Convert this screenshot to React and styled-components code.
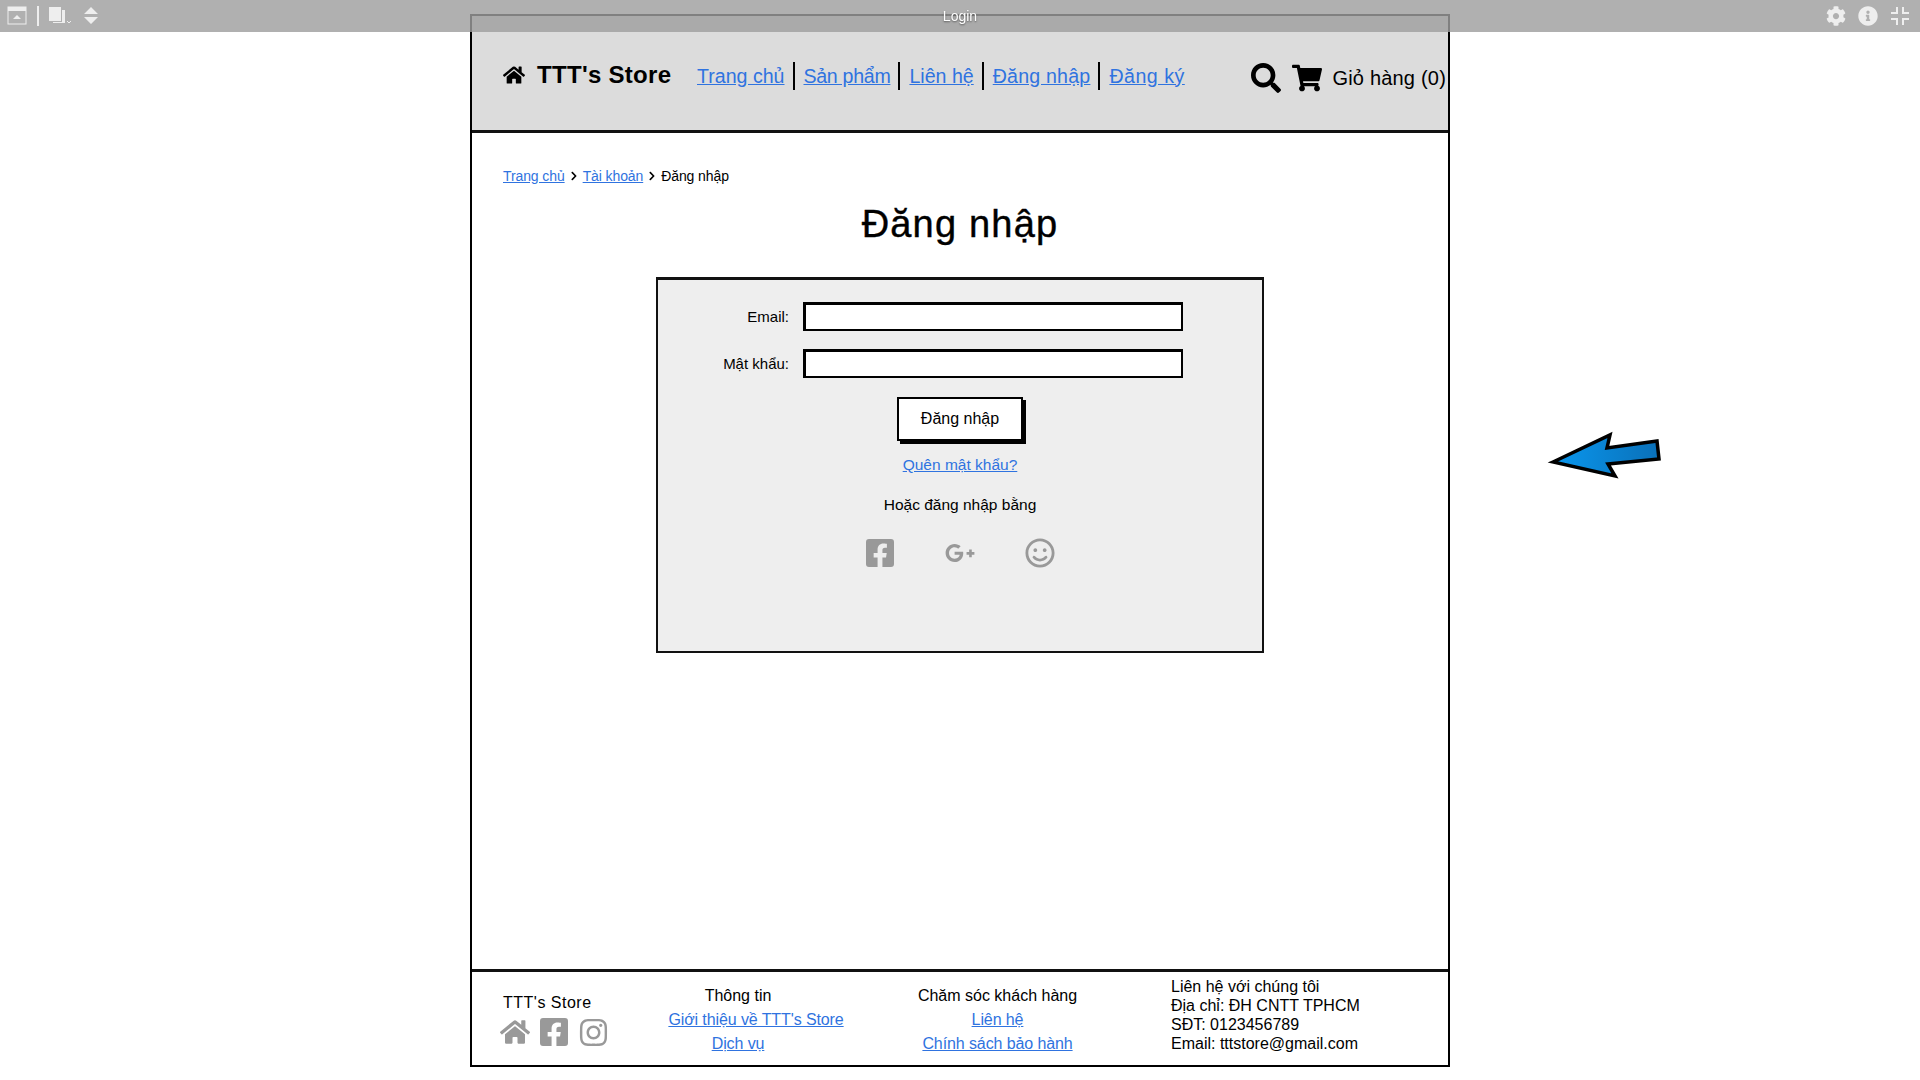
import React from 'react'
import styled, { createGlobalStyle } from 'styled-components'
import {
  FaHome, FaSearch, FaShoppingCart, FaFacebookSquare, FaGooglePlusG, FaRegSmile,
  FaInstagram, FaCog, FaInfoCircle, FaChevronRight,
} from 'react-icons/fa'

const GlobalStyle = createGlobalStyle`
  html, body {
    margin: 0;
    padding: 0;
    height: 1080px;
    overflow: hidden;
    background: #fff;
    color: #000;
    font-family: "Liberation Sans", Arial, sans-serif;
  }
  * { box-sizing: border-box; }
`

const TopBar = styled.div`
  position: fixed;
  top: 0;
  left: 0;
  right: 0;
  height: 32px;
  background: rgba(158, 158, 158, 0.81);
  display: flex;
  align-items: center;
  justify-content: space-between;
  padding: 0 10px 0 7px;
  z-index: 5;
`
const BarGroup = styled.div`
  display: flex;
  align-items: center;
  gap: ${(p) => p.$gap}px;
  color: #eee;
`
const BarDivider = styled.span`
  width: 2px;
  height: 20px;
  background: #eee;
`
const BarTitle = styled.span`
  position: absolute;
  left: 0;
  right: 0;
  text-align: center;
  color: #fff;
  font-size: 14px;
  text-shadow: 0 1px 2px rgba(0, 0, 0, 0.5);
`

const Frame = styled.div`
  width: 980px;
  height: 1053px;
  margin: 14px 0 0 470px;
  border: 2px solid #000;
  display: flex;
  flex-direction: column;
`

const Header = styled.header`
  height: 117px;
  flex: none;
  background: #dcdcdc;
  border-bottom: 3px solid #111;
  display: flex;
  align-items: center;
  padding: 3px 0 0 31px;
`
const Logo = styled.div`
  display: flex;
  align-items: center;
  gap: 12px;
  font-size: 24px;
  font-weight: bold;
  letter-spacing: 0.3px;
  width: 194px;
  flex: none;
`
const Nav = styled.nav`
  display: flex;
  align-items: center;
  height: 28px;
  margin-top: 2px;
`
const NavLink = styled.a`
  color: #2f73e0;
  text-decoration: underline;
  font-size: 19.6px;
  line-height: 24px;
  letter-spacing: ${(p) => p.$spacing || 0}px;
  white-space: nowrap;
`
const NavSep = styled.span`
  width: 2px;
  height: 28px;
  background: #000;
  margin: 0 9px 0 8px;
`
const HeaderTools = styled.div`
  margin-left: auto;
  display: flex;
  align-items: center;
  margin-top: 7px;
`
const SearchIcon = styled(FaSearch)`
  margin-right: 11px;
`
const CartLabel = styled.span`
  font-size: 20px;
  letter-spacing: 0.2px;
  white-space: nowrap;
  margin-left: 10px;
  padding-right: 2px;
`

const Main = styled.main`
  flex: 1;
  padding: 34px 31px 0;
  display: flex;
  flex-direction: column;
`
const Crumbs = styled.div`
  display: flex;
  align-items: center;
  font-size: 14px;
  line-height: 18px;
  letter-spacing: -0.1px;
  gap: 4px;
`
const CrumbLink = styled.a`
  color: #2f73e0;
  text-decoration: underline;
`
const Title = styled.h1`
  margin: 15px 0 0;
  font-size: 38px;
  line-height: 48px;
  font-weight: normal;
  text-align: center;
  letter-spacing: 1.2px;
  -webkit-text-stroke: 0.4px #000;
`
const LoginBox = styled.section`
  width: 608px;
  height: 376px;
  margin: 29px auto 0;
  background: #eee;
  border: 2px solid #111;
  border-top-width: 3px;
  display: flex;
  flex-direction: column;
  align-items: center;
  padding-top: 22px;
`
const Row = styled.label`
  display: grid;
  grid-template-columns: 131px 380px;
  column-gap: 14px;
  align-items: center;
  align-self: flex-start;
  margin: 0 0 18px 0;
  font-size: 15px;
`
const RowLabel = styled.span`
  text-align: right;
`
const Field = styled.input`
  display: block;
  height: 29px;
  width: 380px;
  border: 2px solid #000;
  border-top-width: 3px;
  border-left-width: 3px;
  background: #fff;
  padding: 0 6px;
`
const SubmitButton = styled.button`
  width: 126px;
  height: 44px;
  margin-top: 1px;
  background: #fff;
  border: 2px solid #000;
  box-shadow: 3px 3px 0 #000;
  color: #000;
  font-family: inherit;
  font-size: 16px;
`
const ForgotLink = styled.a`
  margin-top: 15px;
  color: #2f73e0;
  text-decoration: underline;
  font-size: 15.5px;
`
const AltText = styled.p`
  margin: 22px 0 0;
  font-size: 15.5px;
`
const SocialRow = styled.div`
  margin-top: 22px;
  display: flex;
  align-items: center;
  justify-content: center;
  gap: 50px;
  color: #999;
`
const SocialSlot = styled.span`
  width: 30px;
  display: flex;
  justify-content: center;
`

const Footer = styled.footer`
  height: 96px;
  flex: none;
  border-top: 3px solid #111;
  display: grid;
  grid-template-columns: 148px 174px 345px 1fr;
  padding-left: 31px;
  font-size: 16px;
`
const BrandCol = styled.div`
  padding-top: 22px;
  letter-spacing: 0.5px;
`
const BrandIcons = styled.div`
  display: flex;
  align-items: center;
  gap: 8px;
  margin-top: 4px;
  margin-left: -3px;
  color: #999;
`
const LinkCol = styled.div`
  display: flex;
  flex-direction: column;
  align-items: center;
  padding-top: 15px;
  gap: 6px;
  white-space: nowrap;
  line-height: 18px;
`
const FootLink = styled.a`
  color: #2f73e0;
  text-decoration: underline;
  letter-spacing: -0.1px;
  margin-left: ${(p) => p.$shift || 0}px;
`
const ContactCol = styled.div`
  padding-top: 5px;
  padding-left: 1px;
  line-height: 19px;
  white-space: nowrap;
`
const PointerArrow = styled.svg`
  position: absolute;
  left: 1545px;
  top: 428px;
`

export default function App() {
  return (
    <>
      <GlobalStyle />
      <TopBar>
        <BarGroup $gap={10}>
          <svg width="20" height="20" viewBox="0 0 20 20">
            <rect x="1" y="1" width="18" height="17" fill="none" stroke="#eee" />
            <rect x="1" y="1" width="18" height="4" fill="#eee" />
            <path d="M6 13 L10 9 L14 13 Z" fill="#eee" />
          </svg>
          <BarDivider />
          <svg width="24" height="20" viewBox="0 0 24 20">
            <rect x="0" y="1" width="12" height="14" fill="#eee" />
            <path d="M13 4 h3 v13 h-12 v-1 h9 Z" fill="#eee" />
            <path d="M18 15 l2 2 l2 -2" fill="none" stroke="#eee" />
          </svg>
          <svg width="16" height="20" viewBox="0 0 16 20">
            <path d="M8 1 L15 8 H1 Z M1 11 H15 L8 18 Z" fill="#eee" />
          </svg>
        </BarGroup>
        <BarTitle>Login</BarTitle>
        <BarGroup $gap={12}>
          <FaCog size={20} />
          <FaInfoCircle size={20} />
          <svg width="20" height="20" viewBox="0 0 20 20">
            <path d="M7 1 V7 H1 M13 1 V7 H19 M1 13 H7 V19 M19 13 H13 V19" fill="none" stroke="#eee" strokeWidth="2" />
          </svg>
        </BarGroup>
      </TopBar>

      <Frame>
        <Header>
          <Logo><FaHome size={22} />TTT's Store</Logo>
          <Nav>
            <NavLink>Trang chủ</NavLink>
            <NavSep />
            <NavLink $spacing={-0.3}>Sản phẩm</NavLink>
            <NavSep />
            <NavLink>Liên hệ</NavLink>
            <NavSep />
            <NavLink $spacing={0.2}>Đăng nhập</NavLink>
            <NavSep />
            <NavLink $spacing={0.5}>Đăng ký</NavLink>
          </Nav>
          <HeaderTools>
            <SearchIcon size={30} />
            <FaShoppingCart size={30} />
            <CartLabel>Giỏ hàng (0)</CartLabel>
          </HeaderTools>
        </Header>

        <Main>
          <Crumbs>
            <CrumbLink>Trang chủ</CrumbLink>
            <FaChevronRight size={10} />
            <CrumbLink>Tài khoản</CrumbLink>
            <FaChevronRight size={10} />
            <span>Đăng nhập</span>
          </Crumbs>
          <Title>Đăng nhập</Title>
          <LoginBox>
            <Row>
              <RowLabel>Email:</RowLabel>
              <Field />
            </Row>
            <Row>
              <RowLabel>Mật khẩu:</RowLabel>
              <Field />
            </Row>
            <SubmitButton>Đăng nhập</SubmitButton>
            <ForgotLink>Quên mật khẩu?</ForgotLink>
            <AltText>Hoặc đăng nhập bằng</AltText>
            <SocialRow>
              <SocialSlot><FaFacebookSquare size={32} /></SocialSlot>
              <SocialSlot><FaGooglePlusG size={34} /></SocialSlot>
              <SocialSlot><FaRegSmile size={30} /></SocialSlot>
            </SocialRow>
          </LoginBox>
        </Main>

        <Footer>
          <BrandCol>
            TTT's Store
            <BrandIcons>
              <FaHome size={30} />
              <FaFacebookSquare size={32} />
              <FaInstagram size={31} />
            </BrandIcons>
          </BrandCol>
          <LinkCol>
            <span>Thông tin</span>
            <FootLink $shift={36}>Giới thiệu về TTT's Store</FootLink>
            <FootLink>Dịch vụ</FootLink>
          </LinkCol>
          <LinkCol>
            <span>Chăm sóc khách hàng</span>
            <FootLink>Liên hệ</FootLink>
            <FootLink>Chính sách bảo hành</FootLink>
          </LinkCol>
          <ContactCol>
            Liên hệ với chúng tôi<br />
            Địa chỉ: ĐH CNTT TPHCM<br />
            SĐT: 0123456789<br />
            Email: tttstore@gmail.com
          </ContactCol>
        </Footer>
      </Frame>

      <PointerArrow width="120" height="60" viewBox="0 0 120 60">
        <defs>
          <linearGradient id="arrowFill" x1="0" x2="1" y1="0" y2="0">
            <stop offset="0" stopColor="#0a97ee" />
            <stop offset="1" stopColor="#0a70b8" />
          </linearGradient>
        </defs>
        <path d="M8 34 L65 7 L62 20 L112 13 L114 31 L63 36 L70 48 Z" fill="url(#arrowFill)" stroke="#000" strokeWidth="3.5" />
      </PointerArrow>
    </>
  )
}
